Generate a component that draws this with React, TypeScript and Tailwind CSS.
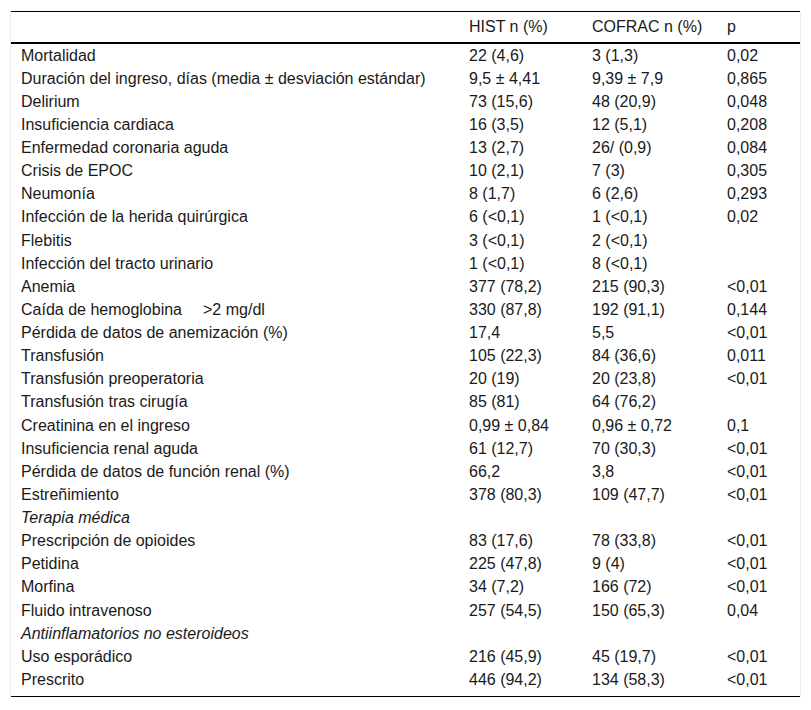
import React from 'react';

type Row = {
  label: React.ReactNode;
  hist?: string;
  cofrac?: string;
  p?: string;
  section?: boolean;
};

const rows: Row[] = [
  { label: 'Mortalidad', hist: '22 (4,6)', cofrac: '3 (1,3)', p: '0,02' },
  { label: 'Duración del ingreso, días (media ± desviación estándar)', hist: '9,5 ± 4,41', cofrac: '9,39 ± 7,9', p: '0,865' },
  { label: 'Delirium', hist: '73 (15,6)', cofrac: '48 (20,9)', p: '0,048' },
  { label: 'Insuficiencia cardiaca', hist: '16 (3,5)', cofrac: '12 (5,1)', p: '0,208' },
  { label: 'Enfermedad coronaria aguda', hist: '13 (2,7)', cofrac: '26/ (0,9)', p: '0,084' },
  { label: 'Crisis de EPOC', hist: '10 (2,1)', cofrac: '7 (3)', p: '0,305' },
  { label: 'Neumonía', hist: '8 (1,7)', cofrac: '6 (2,6)', p: '0,293' },
  { label: 'Infección de la herida quirúrgica', hist: '6 (<0,1)', cofrac: '1 (<0,1)', p: '0,02' },
  { label: 'Flebitis', hist: '3 (<0,1)', cofrac: '2 (<0,1)' },
  { label: 'Infección del tracto urinario', hist: '1 (<0,1)', cofrac: '8 (<0,1)' },
  { label: 'Anemia', hist: '377 (78,2)', cofrac: '215 (90,3)', p: '<0,01' },
  {
    label: (
      <>
        Caída de hemoglobina<span className="ml-[21px]">&gt;2 mg/dl</span>
      </>
    ),
    hist: '330 (87,8)',
    cofrac: '192 (91,1)',
    p: '0,144',
  },
  { label: 'Pérdida de datos de anemización (%)', hist: '17,4', cofrac: '5,5', p: '<0,01' },
  { label: 'Transfusión', hist: '105 (22,3)', cofrac: '84 (36,6)', p: '0,011' },
  { label: 'Transfusión preoperatoria', hist: '20 (19)', cofrac: '20 (23,8)', p: '<0,01' },
  { label: 'Transfusión tras cirugía', hist: '85 (81)', cofrac: '64 (76,2)' },
  { label: 'Creatinina en el ingreso', hist: '0,99 ± 0,84', cofrac: '0,96 ± 0,72', p: '0,1' },
  { label: 'Insuficiencia renal aguda', hist: '61 (12,7)', cofrac: '70 (30,3)', p: '<0,01' },
  { label: 'Pérdida de datos de función renal (%)', hist: '66,2', cofrac: '3,8', p: '<0,01' },
  { label: 'Estreñimiento', hist: '378 (80,3)', cofrac: '109 (47,7)', p: '<0,01' },
  { label: 'Terapia médica', section: true },
  { label: 'Prescripción de opioides', hist: '83 (17,6)', cofrac: '78 (33,8)', p: '<0,01' },
  { label: 'Petidina', hist: '225 (47,8)', cofrac: '9 (4)', p: '<0,01' },
  { label: 'Morfina', hist: '34 (7,2)', cofrac: '166 (72)', p: '<0,01' },
  { label: 'Fluido intravenoso', hist: '257 (54,5)', cofrac: '150 (65,3)', p: '0,04' },
  { label: 'Antiinflamatorios no esteroideos', section: true },
  { label: 'Uso esporádico', hist: '216 (45,9)', cofrac: '45 (19,7)', p: '<0,01' },
  { label: 'Prescrito', hist: '446 (94,2)', cofrac: '134 (58,3)', p: '<0,01' },
];

export default function App() {
  return (
    <div className="w-[811px] h-[710px] bg-white pt-[11px] px-[10px] font-['Liberation_Sans',Arial,sans-serif] text-[#1a1a1a] text-[16px]">
      <div className="border-x border-[#ececec]">
        <table className="w-full border-collapse table-fixed">
          <colgroup>
            <col className="w-[448px]" />
            <col className="w-[123px]" />
            <col className="w-[135px]" />
            <col />
          </colgroup>
          <thead>
            <tr className="border-t border-black border-b-2 border-b-black">
              <th className="h-[31px] p-0 pl-[10px] font-normal text-left" />
              <th className="p-0 pl-[10px] font-normal text-left">HIST n (%)</th>
              <th className="p-0 pl-[10px] font-normal text-left">COFRAC n (%)</th>
              <th className="p-0 pl-[10px] font-normal text-left">p</th>
            </tr>
          </thead>
          <tbody className="border-b border-black">
            {rows.map((r, i) => (
              <tr key={i} className="h-[23.12px] leading-[23.12px]">
                <td className={`p-0 pl-[10px] whitespace-nowrap ${r.section ? 'italic' : ''}`}>{r.label}</td>
                <td className="p-0 pl-[10px] whitespace-nowrap">{r.hist}</td>
                <td className="p-0 pl-[10px] whitespace-nowrap">{r.cofrac}</td>
                <td className="p-0 pl-[10px] whitespace-nowrap">{r.p}</td>
              </tr>
            ))}
            <tr className="h-[5.5px]">
              <td colSpan={4} className="p-0" />
            </tr>
          </tbody>
        </table>
      </div>
    </div>
  );
}
